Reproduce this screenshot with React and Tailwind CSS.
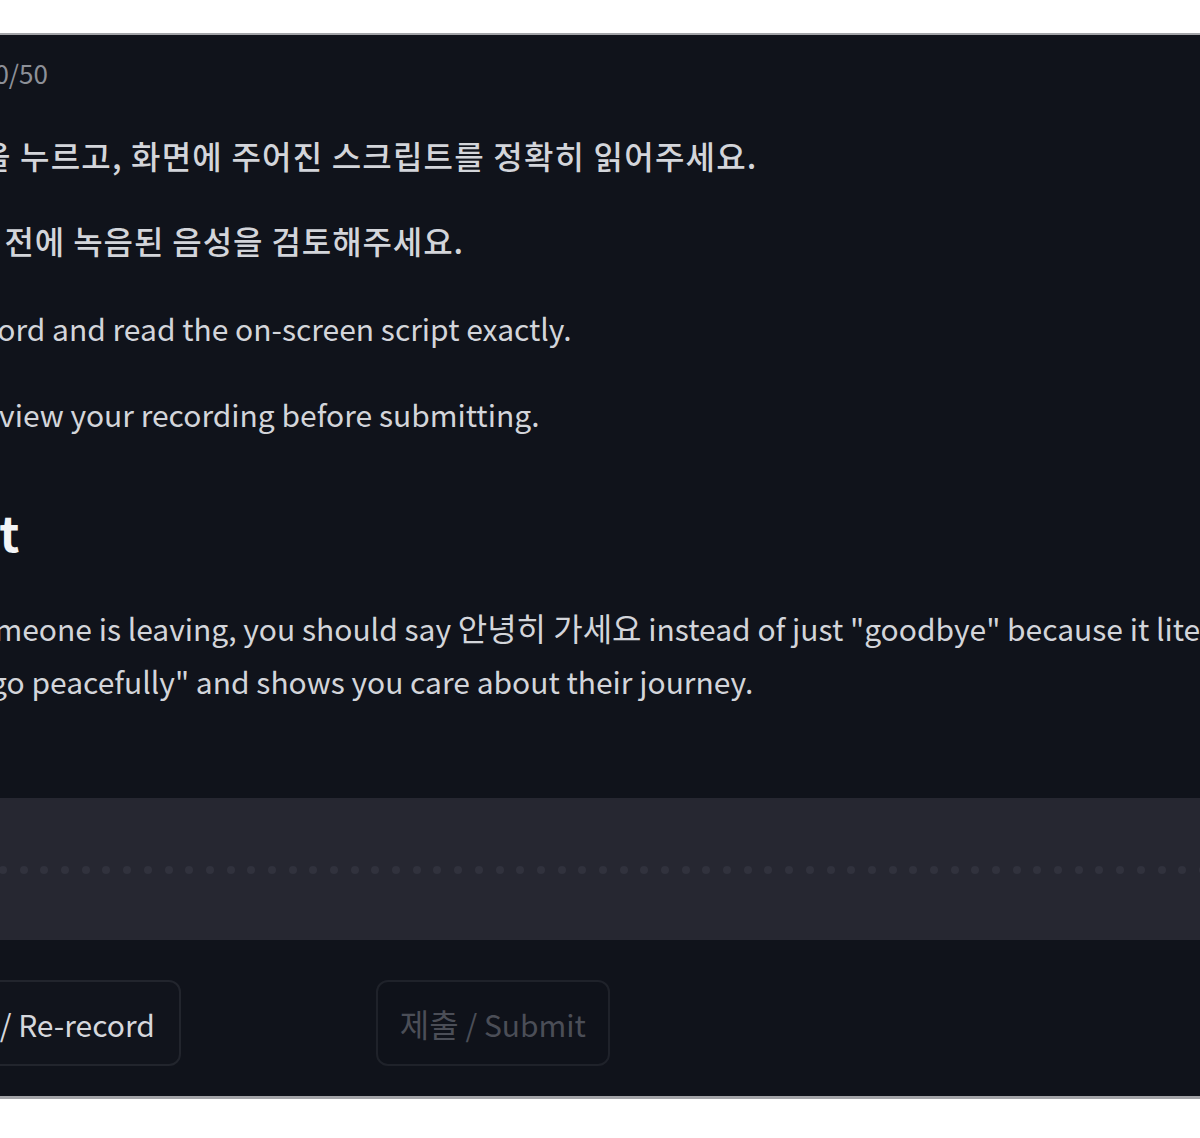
import React from "react";

const dots = Array.from({ length: 60 });

export default function App() {
  return (
    <div className="w-[1200px] h-[1138px] overflow-hidden bg-white font-['Noto_Sans_CJK_KR','Noto_Sans',sans-serif]">
      <div className="h-[33px]" />
      <div className="border-t-2 border-b-[3px] border-[#a3a4a8] bg-[#10131b] whitespace-nowrap">
        <div className="pt-[20px] text-[26px] leading-[36px] text-[#8d9098] -ml-[20px]">10/50</div>

        <div className="mt-[44px] text-[32px] leading-[40px] tracking-[1.2px] font-medium text-[#d3d5da] -ml-[150px]">
          녹음 버튼을 누르고, 화면에 주어진 스크립트를 정확히 읽어주세요.
        </div>
        <div className="mt-[45px] text-[32px] leading-[40px] tracking-[0.9px] font-medium text-[#d3d5da] -ml-[125px]">
          제출하기 전에 녹음된 음성을 검토해주세요.
        </div>
        <div className="mt-[48px] text-[30px] leading-[40px] text-[#d3d5da] -ml-[127px]">
          Press record and read the on-screen script exactly.
        </div>
        <div className="mt-[46px] text-[30px] leading-[40px] text-[#d3d5da] -ml-[127px]">
          Please review your recording before submitting.
        </div>

        <h2 className="mt-[71px] text-[48px] leading-[52px] font-semibold text-[#f3f4f6] -ml-[121px]">Script</h2>

        <p className="mt-[45px] text-[30px] leading-[53px] text-[#d3d5da] -ml-[124px]">
          When someone is leaving, you should say <span className="text-[32px] leading-none">안녕히 가세요</span> instead of just "goodbye" because it literally
          <br />
          means "go peacefully" and shows you care about their journey.
        </p>

        <div className="mt-[90px] h-[142px] bg-[#262731] flex items-center">
          <div className="flex items-center gap-[12.7px] -ml-[1px] mt-[2px]">
            {dots.map((_, i) => (
              <span key={i} className="w-[8px] h-[8px] rounded-full bg-[#31323d] shrink-0" />
            ))}
          </div>
        </div>

        <div className="mt-[40px] mb-[30px] flex items-center gap-[195px] -ml-[158px]">
          <button className="h-[86px] px-[24px] rounded-[12px] border-2 border-[#22252d] bg-[#11141c] text-[30px] text-[#d6d8dd]">
            <span className="text-[32px]">다시 녹음</span> / Re-record
          </button>
          <button disabled className="h-[86px] px-[22px] rounded-[12px] border-2 border-[#1f222a] bg-[#0f121a] text-[30px] text-[#4b4e57]">
            <span className="text-[32px]">제출</span> / Submit
          </button>
        </div>
      </div>
    </div>
  );
}
